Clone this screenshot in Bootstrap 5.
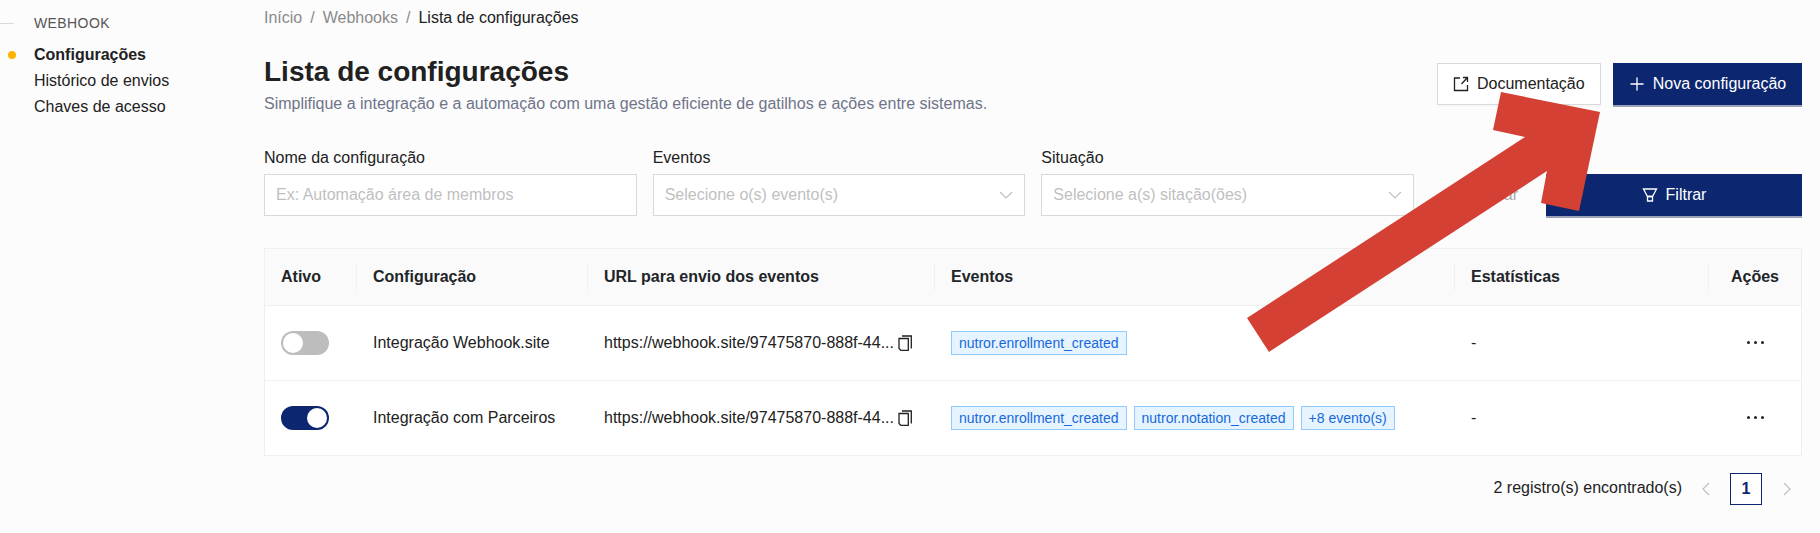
<!DOCTYPE html>
<html lang="pt-BR">
<head>
  <meta charset="UTF-8" />
  <meta name="viewport" content="width=device-width, initial-scale=1.0"/>
  <title>Lista de configurações | Webhook</title>
  <link href="https://cdn.jsdelivr.net/npm/bootstrap@5.3.0/dist/css/bootstrap.min.css" rel="stylesheet">
  <style>
    body {
      font-family: "Liberation Sans", Arial, sans-serif;
      background-color: #fcfcfc;
      color: #212121;
      font-size: 16px;
      overflow: hidden;
    }
    .side-col { width: 264px; flex: none; padding-top: 14px; }
    .side-head { height: 18px; font-size: 14px; letter-spacing: .4px; color: #555; margin-bottom: 10px; line-height: 18px; }
    .side-line { width: 14px; height: 1px; background: #d9d9d9; margin-right: 20px; }
    .side-link { height: 26px; padding-left: 8px; color: #212121; text-decoration: none; gap: 18px; }
    .side-dot { width: 8px; height: 8px; border-radius: 50%; flex: none; }
    .side-link.current { font-weight: 700; }
    .side-link.current .side-dot { background: #ffb300; }
    .main-col { width: 1538px; flex: none; }
    .crumbs { height: 18px; margin: 9px 0 27px; line-height: 18px; --bs-breadcrumb-divider-color: #8a8a8a; --bs-breadcrumb-item-active-color: #212121; --bs-breadcrumb-margin-bottom: 0; }
    .crumbs a { color: #8a8a8a; text-decoration: none; }
    .page-title { font-size: 28px; font-weight: 700; line-height: 36px; margin: 0 0 2px; }
    .page-sub { color: #6f7489; line-height: 24px; margin: 0; }
    .head-block { height: 89px; }
    .head-actions { padding-top: 9px; }
    .btn-doc, .btn-navy { border-radius: 0; height: 42px; font-size: 16px; display: inline-flex; align-items: center; justify-content: center; gap: 8px; }
    .btn-doc { background: #fff; border: 1px solid #d9d9d9; color: #212121; width: 164px; padding: 0 0 0 15px; justify-content: flex-start; box-shadow: 0 2px 0 rgba(0,0,0,.02); }
    .btn-navy { background: #0c276f; color: #fff; border: 0; box-sizing: content-box; border-bottom: 2px solid #9aa3b5; }
    .btn-navy:hover { background: #0c276f; color: #fff; border-bottom-color: #9aa3b5; }
    .btn-new { width: 189px; padding: 0; }
    .btn-filter { width: 256px; padding: 0; }
    .filter-field { width: 372.67px; flex: none; }
    .filter-label { line-height: 20px; margin-bottom: 6px; display: block; }
    .filter-input { height: 42px; border: 1px solid #d9d9d9; border-radius: 0; background: #fff; color: #bfbfbf; padding: 0 11px; font-size: 16px; }
    .filter-input::placeholder { color: #bfbfbf; }
    .btn-clear { color: #a8a8a8; padding: 0 12px; height: 42px; border: 0; background: none; font-size: 16px; }
    .filter-row { margin-top: 5px; margin-bottom: 30px; }
    .filter-actions { padding-top: 26px; }
    .cfg-box { border: 1px solid #efefef; background: #fff; width: 1538px; }
    .cfg-table { table-layout: fixed; width: 1536px; margin: 0; --bs-table-bg: transparent; }
    .cfg-table th { background: #fafafa; height: 56px; font-weight: 700; vertical-align: middle; padding: 0 16px; position: relative; border-bottom: 1px solid #f0f0f0; }
    .cfg-table th:not(:last-child)::after { content: ""; position: absolute; right: 0; top: 15px; height: 26px; width: 1px; background: #f0f0f0; }
    .cfg-table td { height: 75px; vertical-align: middle; padding: 0 16px; border-bottom: 1px solid #f0f0f0; color: #212121; }
    .cfg-table tr:last-child td { border-bottom: 0; }
    .col-ativo { width: 92px; }
    .col-nome { width: 231px; }
    .col-url { width: 347px; }
    .col-eventos { width: 520px; }
    .col-stats { width: 254px; }
    .sw-track { width: 48px; height: 24px; border-radius: 12px; background: #bdbdbd; padding: 2px; }
    .sw-track.on { background: #0c276f; justify-content: flex-end; }
    .sw-knob { width: 20px; height: 20px; border-radius: 50%; background: #fff; }
    .tag-row { gap: 7px; }
    .ev-tag { height: 24px; line-height: 22px; font-size: 14px; padding: 0 7px; background: #e6f4ff; border: 1px solid #91caff; color: #1668dc; }
    .dot-more { width: 3px; height: 3px; border-radius: 50%; background: #212121; }
    .pager-row { height: 32px; margin-top: 17px; }
    .pager-text { margin: 0 20px 2px 0; }
    .pager-prev { margin-right: 20px; }
    .pager-next { margin: 0 11px 0 21px; }
    .pager-num { width: 32px; height: 32px; border: 1px solid #0c276f; color: #0c276f; font-weight: 700; line-height: 30px; text-align: center; background: #fff; }
    .arrow-layer { position: absolute; left: 0; top: 0; pointer-events: none; }
  </style>
</head>
<body>

<div class="d-flex">
  <!-- Sidebar -->
  <aside class="side-col">
    <div class="side-head d-flex align-items-center">
      <span class="side-line"></span><span>WEBHOOK</span>
    </div>
    <nav class="d-flex flex-column">
      <a class="side-link current d-flex align-items-center" href="#"><span class="side-dot"></span>Configurações</a>
      <a class="side-link d-flex align-items-center" href="#"><span class="side-dot"></span>Histórico de envios</a>
      <a class="side-link d-flex align-items-center" href="#"><span class="side-dot"></span>Chaves de acesso</a>
    </nav>
  </aside>

  <main class="main-col">
    <ol class="breadcrumb crumbs">
      <li class="breadcrumb-item"><a href="#">Início</a></li>
      <li class="breadcrumb-item"><a href="#">Webhooks</a></li>
      <li class="breadcrumb-item active">Lista de configurações</li>
    </ol>

    <!-- Heading -->
    <div class="head-block d-flex justify-content-between">
      <div>
        <h1 class="page-title">Lista de configurações</h1>
        <p class="page-sub">Simplifique a integração e a automação com uma gestão eficiente de gatilhos e ações entre sistemas.</p>
      </div>
      <div class="head-actions d-flex gap-2 align-items-start">
        <button class="btn btn-doc">
          <svg width="16" height="16" viewBox="0 0 16 16" fill="none" stroke="currentColor" stroke-width="1.3"><path d="M7 2H1.5v12.5H14.5V9"/><path d="M10 1.5H14.5V6M14.5 1.5 8.5 8"/></svg>
          Documentação
        </button>
        <button class="btn btn-navy btn-new ms-1">
          <svg width="16" height="16" viewBox="0 0 16 16" fill="none" stroke="currentColor" stroke-width="1.3"><path d="M8 1.5v13M1.5 8h13"/></svg>
          Nova configuração
        </button>
      </div>
    </div>

    <!-- Filters -->
    <div class="filter-row d-flex gap-3 align-items-start">
      <div class="filter-field">
        <label class="filter-label">Nome da configuração</label>
        <input class="form-control filter-input" placeholder="Ex: Automação área de membros">
      </div>
      <div class="filter-field">
        <label class="filter-label">Eventos</label>
        <div class="filter-input d-flex align-items-center justify-content-between">
          <span>Selecione o(s) evento(s)</span>
          <svg width="14" height="8" viewBox="0 0 14 8" fill="none" stroke="#bfbfbf" stroke-width="1.2"><path d="M1 1l6 6 6-6"/></svg>
        </div>
      </div>
      <div class="filter-field">
        <label class="filter-label">Situação</label>
        <div class="filter-input d-flex align-items-center justify-content-between">
          <span>Selecione a(s) sitação(ões)</span>
          <svg width="14" height="8" viewBox="0 0 14 8" fill="none" stroke="#bfbfbf" stroke-width="1.2"><path d="M1 1l6 6 6-6"/></svg>
        </div>
      </div>
      <div class="filter-actions d-flex ms-auto align-items-start gap-3">
        <button class="btn btn-clear">Limpar</button>
        <button class="btn btn-navy btn-filter">
          <svg width="16" height="16" viewBox="0 0 16 16" fill="none" stroke="currentColor" stroke-width="1.3"><path d="M1.5 2h13l-4 7.5h-5z"/><path d="M5.5 9.5h5V14h-5z"/></svg>
          Filtrar
        </button>
      </div>
    </div>

    <!-- Table -->
    <div class="cfg-box">
      <table class="table cfg-table">
        <thead>
          <tr>
            <th class="col-ativo">Ativo</th>
            <th class="col-nome">Configuração</th>
            <th class="col-url">URL para envio dos eventos</th>
            <th class="col-eventos">Eventos</th>
            <th class="col-stats">Estatísticas</th>
            <th class="text-center">Ações</th>
          </tr>
        </thead>
        <tbody>
          <tr>
            <td><div class="sw-track d-flex"><span class="sw-knob"></span></div></td>
            <td>Integração Webhook.site</td>
            <td>
              <div class="d-flex align-items-center gap-1">https://webhook.site/97475870-888f-44...
                <svg width="14" height="16" viewBox="0 0 14 16" fill="none" stroke="#212121" stroke-width="1.3"><path d="M4 1h9.3v12.5"/><path d="M1 3.5h9.3v12H3l-2-2z"/></svg>
              </div>
            </td>
            <td><div class="tag-row d-flex"><span class="ev-tag">nutror.enrollment_created</span></div></td>
            <td>-</td>
            <td><div class="d-flex justify-content-center gap-1"><span class="dot-more"></span><span class="dot-more"></span><span class="dot-more"></span></div></td>
          </tr>
          <tr>
            <td><div class="sw-track on d-flex"><span class="sw-knob"></span></div></td>
            <td>Integração com Parceiros</td>
            <td>
              <div class="d-flex align-items-center gap-1">https://webhook.site/97475870-888f-44...
                <svg width="14" height="16" viewBox="0 0 14 16" fill="none" stroke="#212121" stroke-width="1.3"><path d="M4 1h9.3v12.5"/><path d="M1 3.5h9.3v12H3l-2-2z"/></svg>
              </div>
            </td>
            <td>
              <div class="tag-row d-flex">
                <span class="ev-tag">nutror.enrollment_created</span>
                <span class="ev-tag">nutror.notation_created</span>
                <span class="ev-tag">+8 evento(s)</span>
              </div>
            </td>
            <td>-</td>
            <td><div class="d-flex justify-content-center gap-1"><span class="dot-more"></span><span class="dot-more"></span><span class="dot-more"></span></div></td>
          </tr>
        </tbody>
      </table>
    </div>

    <!-- Pagination -->
    <div class="pager-row d-flex justify-content-end align-items-center">
      <span class="pager-text">2 registro(s) encontrado(s)</span>
      <svg class="pager-prev" width="8" height="14" viewBox="0 0 8 14" fill="none" stroke="#bfbfbf" stroke-width="1.2"><path d="M7 1 1 7l6 6"/></svg>
      <span class="pager-num">1</span>
      <svg class="pager-next" width="8" height="14" viewBox="0 0 8 14" fill="none" stroke="#bfbfbf" stroke-width="1.2"><path d="m1 1 6 6-6 6"/></svg>
    </div>
  </main>
</div>

<!-- red annotation arrow drawn over the screenshot -->
<svg class="arrow-layer" width="1820" height="533" viewBox="0 0 1820 533">
  <polygon fill="#d44034" points="1501,92 1600,112 1579,211 1541,203 1547,171 1269,352 1247,318 1525,137 1493,130"/>
</svg>

<script src="https://cdn.jsdelivr.net/npm/bootstrap@5.3.0/dist/js/bootstrap.bundle.min.js"></script>
</body>
</html>
